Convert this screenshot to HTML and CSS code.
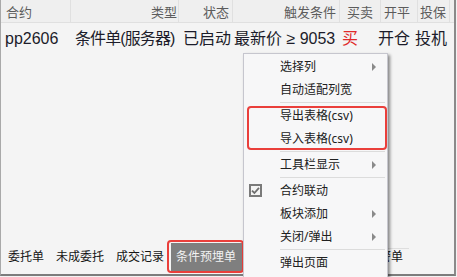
FILE: index.html
```html
<!DOCTYPE html>
<html lang="zh-CN">
<head>
<meta charset="utf-8">
<link rel="stylesheet" href="styles.css">
</head>
<body>
<div class="window">
  <div class="header">
    <div class="hc c1">合约</div>
    <div class="hc c2">类型</div>
    <div class="hc c3">状态</div>
    <div class="hc c4">触发条件</div>
    <div class="hc c5">买卖</div>
    <div class="hc c6">开平</div>
    <div class="hc c7">投保</div>
    <div class="hc c8"></div>
  </div>
  <div class="row">
    <div class="dc d1">pp2606</div>
    <div class="dc d2">条件单(服务器)</div>
    <div class="dc d3">已启动</div>
    <div class="dc d4">最新价 ≥ 9053</div>
    <div class="dc d5 buy">买</div>
    <div class="dc d6">开仓</div>
    <div class="dc d7">投机</div>
    <div class="dc d8">丫</div>
  </div>
  <div class="spacer"></div>
  <div class="tabbar">
    <div class="tab">委托单</div>
    <div class="tab">未成委托</div>
    <div class="tab">成交记录</div>
    <div class="tab active">条件预埋单</div>
    <div class="tab">止损止盈</div>
    <div class="tab">画线下单</div>
    <div class="tab last">预警单</div>
  </div>
</div>

<div class="menu">
  <div class="item">选择列<span class="arrow"></span></div>
  <div class="item">自动适配列宽</div>
  <div class="sep"></div>
  <div class="group">
    <div class="item">导出表格(csv)</div>
    <div class="item">导入表格(csv)</div>
  </div>
  <div class="sep"></div>
  <div class="item">工具栏显示<span class="arrow"></span></div>
  <div class="sep"></div>
  <div class="item check-item"><span class="checkbox"><svg width="9" height="9" viewBox="0 0 9 9"><path d="M1 4.6 L3.4 7 L8 1.8" fill="none" stroke="#6e6e6e" stroke-width="1.8"/></svg></span>合约联动</div>
  <div class="item">板块添加<span class="arrow"></span></div>
  <div class="item">关闭/弹出<span class="arrow"></span></div>
  <div class="sep"></div>
  <div class="item">弹出页面</div>
  <div class="item">&nbsp;</div>
</div>
</body>
</html>
```

FILE: styles.css
```css
html, body {
  margin: 0;
  padding: 0;
}
body {
  width: 457px;
  height: 277px;
  overflow: hidden;
  background: #f2f2f2;
  position: relative;
  font-family: "Noto Sans", "Noto Sans CJK SC", sans-serif;
}
.window {
  width: 453px;
  height: 274px;
  border-left: 1px solid #a9a9a9;
  border-right: 2px solid #8a8a8a;
  border-bottom: 2px solid #7c7c7c;
  background: #f4f4f4;
  display: flex;
  flex-direction: column;
  overflow: hidden;
}
.header {
  display: flex;
  height: 22px;
  border-bottom: 1px solid #e0e0e0;
  background: #efefef;
  font-size: 13px;
  color: #5c5c5c;
  flex: none;
}
.hc {
  box-sizing: border-box;
  height: 22px;
  line-height: 24px;
  border-right: 1px solid #e0e0e0;
  white-space: nowrap;
  flex: none;
}
.c1 { width: 70px; padding-left: 5px; }
.c2 { width: 108px; text-align: right; padding-right: 1px; }
.c3 { width: 54px; padding-left: 24px; }
.c4 { width: 107px; padding-left: 51px; }
.c5 { width: 41px; padding-left: 7px; }
.c6 { width: 37px; padding-left: 3px; }
.c7 { width: 32px; padding-left: 2px; }
.c8 { width: 10px; border-right: none; }

.row {
  display: flex;
  height: 30px;
  font-family: "Liberation Sans", "Noto Sans CJK SC", sans-serif;
  font-size: 16px;
  color: #1c1c2a;
  flex: none;
}
.dc {
  box-sizing: border-box;
  line-height: 31px;
  white-space: nowrap;
  flex: none;
}
.d1 { width: 70px; padding-left: 4px; }
.d2 { width: 108px; padding-left: 4px; letter-spacing: -0.9px; }
.d3 { width: 54px; padding-left: 4px; }
.d4 { width: 107px; padding-left: 1px; }
.d5 { width: 36px; padding-left: 2px; }
.d6 { width: 37px; padding-left: 2px; }
.d7 { width: 37px; padding-left: 2px; }
.d8 { width: 6px; padding-left: 2px; }
.buy { color: #e02a2a; }

.spacer { flex: 1; }

.tabbar {
  display: flex;
  height: 30px;
  margin-bottom: 2px;
  padding-left: 1px;
  font-size: 12px;
  color: #151515;
  flex: none;
}
.tab {
  padding: 0 6px;
  line-height: 30px;
  white-space: nowrap;
  position: relative;
}
.tab.active {
  margin-left: 1px;
  padding: 0 6px 0 5px;
  background: #7f7f7f;
  color: #f2f2f2;
  height: 29px;
  margin-top: 1px;
  line-height: 28px;
}
.tab.active::after {
  content: "";
  position: absolute;
  left: -4px;
  right: -2px;
  top: -3px;
  bottom: -1px;
  border: 2px solid #ea3f3b;
  border-radius: 4px;
}
.tab.last {
  margin-left: -1px;
}
.tab.last::before {
  content: "";
  position: absolute;
  left: 0;
  right: 0;
  top: 6px;
  height: 1px;
  background: #dedede;
}

.menu {
  position: absolute;
  left: 243px;
  top: 53px;
  width: 143px;
  border: 1px solid #c6c6ce;
  background: #f7f7f8;
  padding-top: 1px;
  box-shadow: 2px 2px 3px rgba(0, 0, 0, 0.45);
  font-size: 12px;
  color: #202020;
}
.item {
  height: 23px;
  line-height: 23px;
  padding: 0 11px 0 36px;
  display: flex;
  align-items: center;
  justify-content: space-between;
  white-space: nowrap;
}
.arrow {
  width: 0;
  height: 0;
  border-top: 4px solid transparent;
  border-bottom: 4px solid transparent;
  border-left: 4px solid #8a8a8a;
}
.sep {
  height: 1px;
  margin: 1px 2px 1px 36px;
  background: #dcdcdc;
}
.group {
  position: relative;
}
.group::after {
  content: "";
  position: absolute;
  left: 3px;
  right: 0;
  top: 2px;
  bottom: 0;
  border: 2px solid #ea3f3b;
  border-radius: 4px;
}
.check-item {
  justify-content: flex-start;
  padding-left: 5px;
}
.checkbox {
  box-sizing: border-box;
  width: 13px;
  height: 13px;
  border: 2px solid #7a7a7a;
  background: #f4f4f4;
  margin-right: 18px;
  display: flex;
  align-items: center;
  justify-content: center;
}
.checkbox svg { display: block; }
```
